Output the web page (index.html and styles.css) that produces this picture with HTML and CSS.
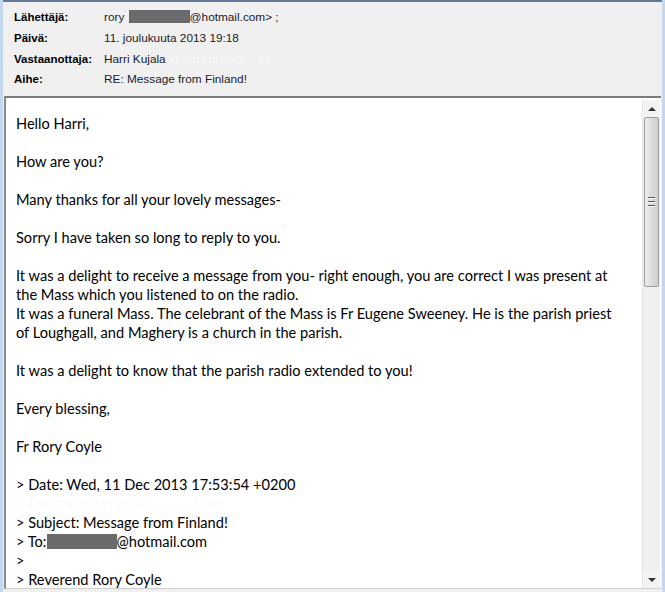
FILE: index.html
```html
<!DOCTYPE html>
<html>
<head>
<meta charset="utf-8">
<link rel="stylesheet" href="styles.css">
</head>
<body>
<div class="window">
  <div class="header">
    <div class="label">Lähettäjä:</div>
    <div class="value">rory <span class="redact r1"></span>@hotmail.com&gt; ;</div>
    <div class="label">Päivä:</div>
    <div class="value">11. joulukuuta 2013 19:18</div>
    <div class="label">Vastaanottaja:</div>
    <div class="value">Harri Kujala <span class="ghost">&lt;harri.kujala@....fi&gt;</span></div>
    <div class="label">Aihe:</div>
    <div class="value">RE: Message from Finland!</div>
  </div>
  <div class="message">
    <div class="content">
      <p>Hello Harri,</p>
      <p>How are you?</p>
      <p>Many thanks for all your lovely messages-</p>
      <p>Sorry I have taken so long to reply to you.</p>
      <p><span class="ln">It was a delight to receive a message from you- right enough, you are correct I was present at</span><span class="ln">the Mass which you listened to on the radio.</span><span class="ln">It was a funeral Mass. The celebrant of the Mass is Fr Eugene Sweeney. He is the parish priest</span><span class="ln">of Loughgall, and Maghery is a church in the parish.</span></p>
      <p>It was a delight to know that the parish radio extended to you!</p>
      <p>Every blessing,</p>
      <p>Fr Rory Coyle</p>
      <p class="quote"><span class="ln">&gt; Date: Wed, 11 Dec 2013 17:53:54 +0200</span><span class="ln ghost">&gt; From: harri.kujala@............fi.net</span><span class="ln">&gt; Subject: Message from Finland!</span><span class="ln">&gt; To:<span class="redact r2"></span>@hotmail.com</span><span class="ln">&gt;</span><span class="ln">&gt; Reverend Rory Coyle</span></p>
    </div>
    <div class="scrollbar">
      <div class="btn up"><span class="tri-up"></span></div>
      <div class="thumb"><span class="grip"></span><span class="grip"></span><span class="grip"></span></div>
      <div class="track"></div>
      <div class="btn down"><span class="tri-down"></span></div>
    </div>
  </div>
</div>
</body>
</html>
```
FILE: styles.css
```css
html, body {
  margin: 0;
  padding: 0;
}
body {
  width: 665px;
  height: 592px;
  background: #c3d8ee;
  overflow: hidden;
}
.window {
  margin: 0 3px 0 3px;
  height: 592px;
  background: #f0f0f0;
  border-top: 2px solid #62799a;
  box-sizing: border-box;
  display: flex;
  flex-direction: column;
}
.header {
  display: grid;
  grid-template-columns: 90px 1fr;
  grid-auto-rows: 20.7px;
  align-items: center;
  padding: 5px 0 0 11px;
  height: 94px;
  box-sizing: border-box;
  color: #1b1b2b;
}
.label {
  font-family: "Liberation Sans", Arial, sans-serif;
  font-size: 11.5px;
  font-weight: bold;
  color: #000;
}
.value {
  font-family: "Liberation Sans", Arial, sans-serif;
  font-size: 11.8px;
  white-space: nowrap;
}
.redact {
  display: inline-block;
  background: #6b6b6b;
  vertical-align: middle;
}
.r1 {
  width: 61px;
  height: 13px;
  margin: -3px 0 0 1px;
}
.r2 {
  width: 70px;
  height: 15px;
  margin-top: -3px;
}
.ghost {
  color: #fbfbfb;
}
.header .ghost {
  color: #f6f6f6;
}
.message {
  flex: 1;
  margin-left: 1px;
  margin-right: 1px;
  margin-bottom: 3px;
  background: #fff;
  border-top: 2px solid #7b7b7b;
  border-left: 2px solid #8a8a8a;
  border-bottom: 1px solid #d0d0d0;
  display: flex;
  overflow: hidden;
}
.content {
  flex: 1;
  padding: 16px 0 0 10px;
  font-family: Lato, "Open Sans", sans-serif;
  font-size: 14.6px;
  line-height: 19px;
  color: #000;
  overflow: hidden;
}
.content p {
  margin: 0 0 19px 0;
  white-space: nowrap;
}
.ln {
  display: block;
}
.scrollbar {
  width: 17px;
  margin: 2px 1px 0 0;
  display: flex;
  flex-direction: column;
  background: #f0f0f0;
  border-left: 1px solid #e6e6e6;
}
.btn {
  height: 17px;
  display: flex;
  align-items: center;
  justify-content: center;
  background: #f3f3f3;
}
.tri-up {
  width: 0;
  height: 0;
  border-left: 4px solid transparent;
  border-right: 4px solid transparent;
  border-bottom: 4px solid #333;
}
.tri-down {
  width: 0;
  height: 0;
  border-left: 4px solid transparent;
  border-right: 4px solid transparent;
  border-top: 4px solid #333;
}
.thumb {
  height: 170px;
  margin: 0 1px;
  border: 1px solid #9a9a9a;
  border-radius: 2px;
  background: linear-gradient(to right, #ededed, #dcdcdc 50%, #cfcfcf);
  display: flex;
  flex-direction: column;
  align-items: center;
  justify-content: center;
  gap: 2px;
  box-sizing: border-box;
}
.grip {
  display: block;
  width: 7px;
  height: 1px;
  background: #5a5a5a;
  border-bottom: 1px solid #f8f8f8;
}
.track {
  flex: 1;
}
```
